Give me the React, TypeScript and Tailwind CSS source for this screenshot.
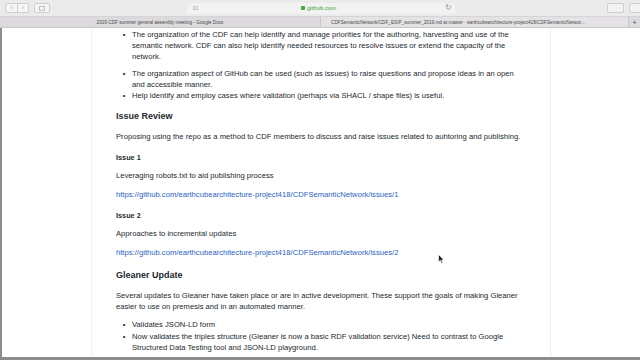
import React from 'react'

const font = { fontFamily: '"Liberation Sans", Arial, sans-serif' }

const Bullet: React.FC<{ children: React.ReactNode }> = ({ children }) => (
  <li className="flex gap-[6px]">
    <span className="w-[4px] shrink-0 text-center">•</span>
    <span>{children}</span>
  </li>
)

const App: React.FC = () => {
  return (
    <div className="w-[640px] h-[360px] overflow-hidden bg-[#8d8d8d] flex flex-col text-[#24292e]" style={font}>
      {/* toolbar */}
      <div className="h-[17px] shrink-0 bg-[#ecebec] flex items-center pl-[5px] gap-[4px] border-b border-[#d6d4d6] overflow-hidden">
        <div className="flex h-[10px] rounded-[2px] border border-[#d0ced0] bg-[#f6f5f6]">
          <span className="w-[11px] text-[8px] leading-[8px] text-[#b8b8b8] text-center">‹</span>
          <span className="w-[11px] text-[8px] leading-[8px] text-[#b8b8b8] text-center border-l border-[#d0ced0]">›</span>
        </div>
        <div className="w-[16px] h-[10px] rounded-[2px] border border-[#d0ced0] bg-[#f6f5f6] ml-[1px] flex items-center justify-center">
          <div className="w-[6px] h-[5px] border border-[#c0c0c0]" />
        </div>
        <div className="ml-[133px] w-[268px] h-[11px] rounded-[2px] bg-[#f3f2f3] relative shrink-0">
          <span className="absolute left-[6px] top-[3px] w-[5px] h-[4px] border border-[#c8c8c8] bg-[#e4e4e4]" />
          <span className="absolute left-[114px] top-[1px] text-[6px] leading-[8px] flex items-center gap-[2px]">
            <span className="w-[4px] h-[4px] rounded-[1px] bg-[#3fae49]" />
            <span className="text-[#39a343]">github.com</span>
          </span>
          <span className="absolute right-[3px] top-[0px] text-[8px] leading-[10px] text-[#9a9a9a]">↻</span>
        </div>
        <div className="ml-auto flex gap-[5px] mr-[-4px]">
          <div className="w-[17px] h-[10px] rounded-[2px] border border-[#d0ced0] bg-[#f3f2f3]" />
          <div className="w-[15px] h-[10px] rounded-[2px] border border-[#d0ced0] bg-[#f3f2f3]" />
        </div>
      </div>
      {/* tabs */}
      <div className="h-[11px] shrink-0 bg-[#dcdadc] flex text-[4.7px] leading-[11px] text-[#4a4a4a] border-b border-[#c8c6c8]">
        <div className="w-[320px] text-center">2019 CDF summer general assembly meeting - Google Docs</div>
        <div className="flex-1 pl-[10px] border-l border-[#c8c6c8] bg-[#e4e2e4] whitespace-nowrap overflow-hidden">
          CDFSemanticNetwork/CDF_ESIP_summer_2019.md at master · earthcubearchitecture-project418/CDFSemanticNetwor...
        </div>
        <div className="w-[12px] text-center border-l border-[#c8c6c8] text-[7px]">+</div>
      </div>
      {/* page */}
      <div className="flex-1 ml-[2px] mb-[3px] bg-white flex overflow-hidden">
        <div className="w-[90px] border-r border-[#f2f2f2]" />
        <div className="w-[459px] border-r border-[#eeeeee] pl-[24px] pr-[27px] text-[7.65px] leading-[11px]">
          <ul className="pl-[6px] mt-[1px] flex flex-col">
            <Bullet>The organization of the CDF can help identify and manage priorities for the authoring, harvesting and use of the semantic network. CDF can also help identify needed resources to resolve issues or extend the capacity of the network.</Bullet>
            <li className="h-[6px]" />
            <Bullet>The organization aspect of GitHub can be used (such as issues) to raise questions and propose ideas in an open and accessible manner.</Bullet>
            <Bullet>Help identify and employ cases where validation (perhaps via SHACL / shape files) is useful.</Bullet>
          </ul>
          <h2 className="mt-[9px] text-[9px] leading-[13px] font-bold text-[#24292e]">Issue Review</h2>
          <p className="mt-[8px]">Proposing using the repo as a method to CDF members to discuss and raise issues related to auhtoring and publishing.</p>
          <h4 className="mt-[10px] font-bold text-[7.3px]">Issue 1</h4>
          <p className="mt-[7px]">Leveraging robots.txt to aid publishing process</p>
          <p className="mt-[8px] text-[#2a63c4]">https://github.com/earthcubearchitecture-project418/CDFSemanticNetwork/issues/1</p>
          <h4 className="mt-[10px] font-bold text-[7.3px]">Issue 2</h4>
          <p className="mt-[7px]">Approaches to incremental updates</p>
          <p className="mt-[8px] text-[#2a63c4]">https://github.com/earthcubearchitecture-project418/CDFSemanticNetwork/issues/2</p>
          <h2 className="mt-[11px] text-[9px] leading-[13px] font-bold">Gleaner Update</h2>
          <p className="mt-[8px]">Several updates to Gleaner have taken place or are in active development. These support the goals of making Gleaner easier to use on premesis and in an automated manner.</p>
          <ul className="pl-[6px] mt-[7px] flex flex-col gap-[1px]">
            <Bullet>Validates JSON-LD form</Bullet>
            <Bullet>Now validates the triples structure (Gleaner is now a basic RDF validation service) Need to contrast to Google Structured Data Testing tool and JSON-LD playground.</Bullet>
          </ul>
        </div>
        <div className="flex-1 relative">
          <svg className="absolute left-[-113px] top-[226px]" width="7" height="10" viewBox="0 0 7 10">
            <path d="M0.5 0.5 L0.5 8 L2.3 6.3 L3.6 9.3 L4.8 8.8 L3.6 5.9 L6 5.9 Z" fill="#222" stroke="#fff" strokeWidth="0.6" />
          </svg>
        </div>
      </div>
    </div>
  )
}

export default App
